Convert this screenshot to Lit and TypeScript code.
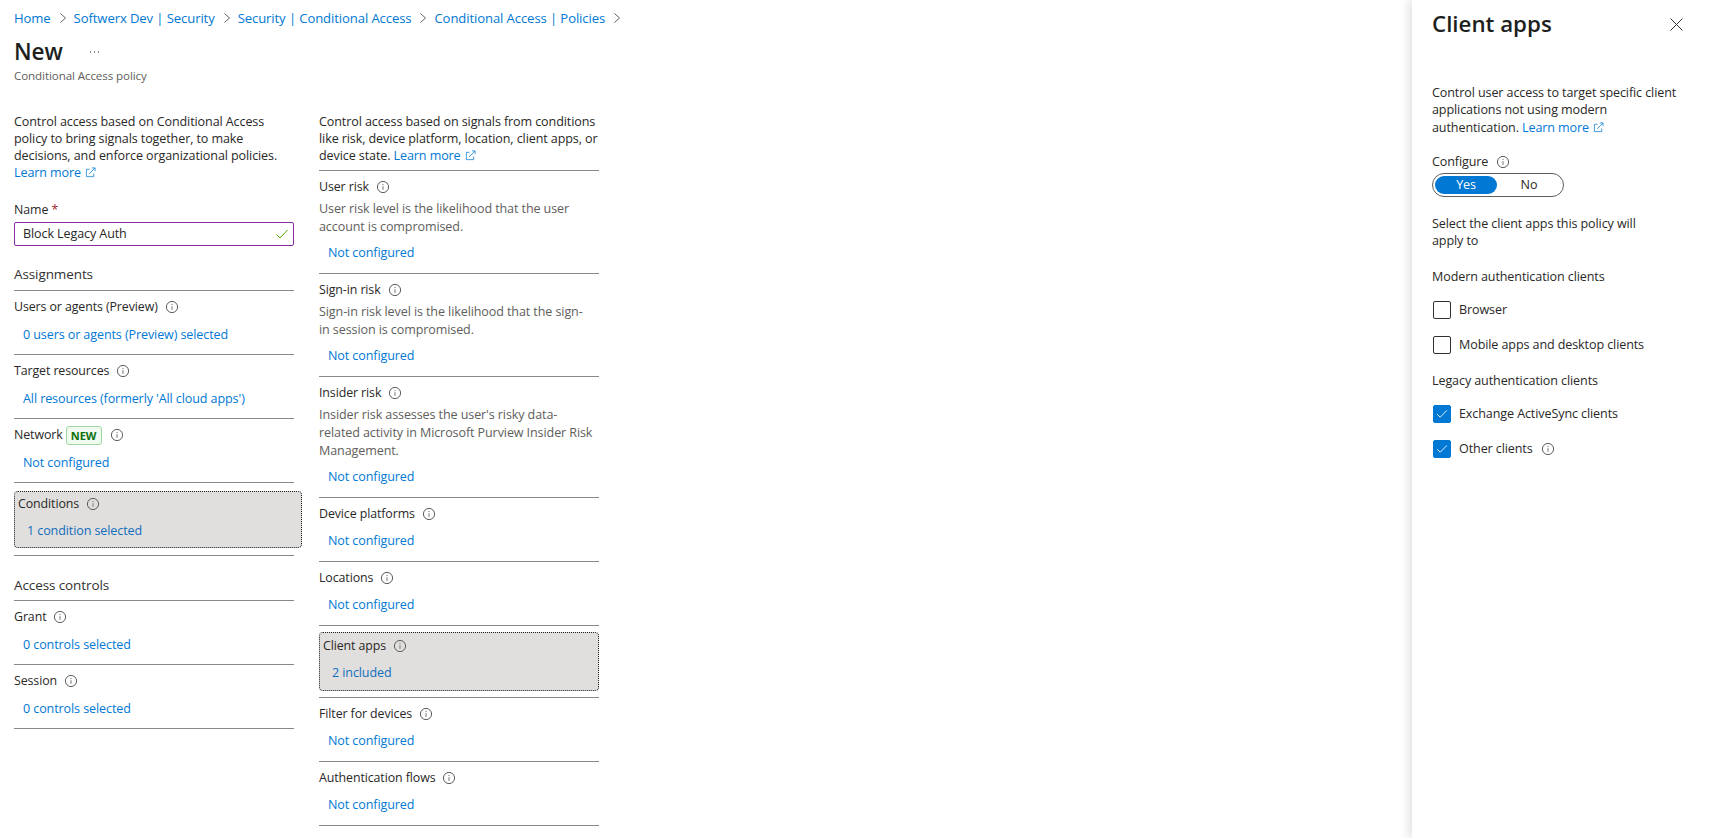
import { LitElement, html, css, svg } from "lit";
import { customElement } from "lit/decorators.js";

const info = html`<svg class="info" width="14" height="14" viewBox="0 0 14 14"><circle cx="7" cy="7" r="5.6" fill="none" stroke="#605e5c" stroke-width="1"/><path d="M7 6.2v3.6" stroke="#8a8886" stroke-width="1.2"/><circle cx="7" cy="4.5" r=".7" fill="#8a8886"/></svg>`;
const ext = html`<svg class="ext" width="11" height="11" viewBox="0 0 12 12" fill="none" stroke="#0078d4" stroke-width=".8"><path d="M5 2.5H1.5v8h8V7"/><path d="M4.5 7.5 10.8 1.2M7.5 1h3.5v3.5"/></svg>`;
const chev = html`<svg class="chev" width="8" height="12" viewBox="0 0 8 12" fill="none" stroke="#605e5c" stroke-width="1"><path d="M1.5 1.5 6.5 6l-5 4.5"/></svg>`;
const check = svg`<path d="M3.5 9.2 7 12.6 14.5 5" fill="none" stroke="#fff" stroke-width="1"/>`;

type Row = { label: unknown; link: string; desc?: unknown; sel?: boolean };

@customElement("app-root")
export class AppRoot extends LitElement {
  static styles = css`
    :host { display: block; width: 1711px; height: 838px; overflow: hidden; background: #fff;
      font-family: "Open Sans", "Liberation Sans", sans-serif; font-size: 12.55px; color: #292827; letter-spacing: -0.1px; }
    .page { display: flex; height: 838px; }
    .main { flex: 1; padding: 9px 0 0 14px; min-width: 0; }
    a { color: #0078d4; text-decoration: none; }
    .crumbs { display: flex; align-items: center; height: 18px; line-height: 18px; font-size: 13.1px; }
    .chev { margin: 0 7px 0 8px; }
    .title { display: flex; align-items: center; margin-top: 9px; height: 32px; }
    h1 { margin: 0; font-size: 22.5px; font-weight: 600; line-height: 32px; color: #201f1e; letter-spacing: 0; }
    .dots { margin-left: 27px; display: flex; gap: 2.5px; }
    .dots i { width: 1.5px; height: 1.5px; background: #8a8886; display: block; }
    .sub { font-size: 11.6px; line-height: 16px; color: #605e5c; }
    .cols { display: flex; gap: 25px; margin-top: 29px; }
    .col { width: 280px; }
    .p { line-height: 17px; }
    .ext { margin-left: 1px; vertical-align: -1px; }
    .info { margin-left: 7px; flex: none; }
    .intro { margin-bottom: 6px; }
    .name { margin-top: 19px; line-height: 20px; height: 20px; font-size: 12.4px; }
    .name b { color: #a4262c; font-weight: 400; }
    .input { margin-top: 2px; height: 24px; box-sizing: border-box; border: 1px solid #8a2da5; border-radius: 2px;
      display: flex; align-items: center; justify-content: space-between; padding: 0 4px 0 8px; line-height: 20px; }
    .sect { line-height: 20px; height: 20px; font-size: 13.5px; color: #323130; }
    .sect.a { margin-top: 18px; }
    .sect.b { margin-top: 19px; }
    .list { border-top: 1px solid #8a8886; margin-top: 6px; }
    .sect.b + .list { margin-top: 5px; }
    .col.tall .list { margin-top: 0; }
    .row { border-bottom: 1px solid #8a8886; padding: 6px 0 10px; }
    .lab { display: flex; align-items: center; height: 20px; line-height: 20px; font-size: 12.4px; }
    .desc { margin-top: 3px; line-height: 17.6px; color: #605e5c; }
    .lnk { display: block; height: 20px; line-height: 20px; margin: 7px 0 0 9px; }
    .wide .row { padding-bottom: 9px; }
    .wide .lnk { margin-top: 8px; }
    .desc + .lnk { margin-top: 8px; }
    .badge { margin-left: 3px; height: 19px; width: 36px; box-sizing: border-box; border: 1px solid #9fd89f; border-radius: 3px;
      background: #f1faf1; color: #0e700e; font-weight: 700; font-size: 11px; line-height: 17px; text-align: center; letter-spacing: 0; }
    .badge + .info { margin-left: 8px; }
    .row.sel { padding: 7px 0 8px; }
    .wide .row.sel { padding: 8px 0 7px; }
    .box { box-sizing: border-box; background: #e1dfdd; border: 1px dotted #201f1e; border-radius: 4px; padding: 2px 0 6px 3px; height: 57px; }
    .box .lnk { margin-left: 9px; color: #106ebe; }
    .wide .box .lnk { margin-top: 7px; }
    .wide .box { width: 288px; }
    .tall .row.sel { padding: 6px 0 6px; }
    .tall .box { height: 59px; padding-top: 3px; }
    .panel { width: 299px; box-sizing: border-box; flex: none; padding: 8px 0 0 20px; box-shadow: -3px 0 10px rgba(0,0,0,.13); position: relative; }
    .phead { display: flex; align-items: center; justify-content: space-between; height: 32px; padding-right: 28px; }
    h2 { margin: 0; font-size: 22.3px; font-weight: 600; color: #201f1e; line-height: 32px; letter-spacing: 0; }
    .pdesc { margin-top: 44px; line-height: 17.33px; }
    .lbl { height: 20px; line-height: 20px; display: flex; align-items: center; }
    .cfg { margin-top: 16px; }
    .cfg .info { margin-left: 8px; }
    .toggle { margin-top: 1px; width: 132px; height: 24px; box-sizing: border-box; border: 1px solid #605e5c; border-radius: 12px;
      display: flex; padding: 2px; line-height: 18px; }
    .toggle span { flex: 1; text-align: center; border-radius: 9px; }
    .toggle .on { background: #0078d4; color: #fff; flex: none; width: 62px; }
    .sel-text { margin-top: 18px; line-height: 17.5px; }
    .chk { display: flex; align-items: center; gap: 8px; height: 20px; line-height: 20px; padding-left: 1px; }
    .chk .info { margin-left: 0; }
    .cb { width: 18px; height: 18px; box-sizing: border-box; border: 1px solid #323130; border-radius: 2px; display: block; flex: none; }
    .cb.on { background: #0078d4; border-color: #0078d4; }
    .m17 { margin-top: 17px; } .m16 { margin-top: 16px; } .m13 { margin-top: 13px; } .m15 { margin-top: 15px; }
  `;

  private rows(rows: Row[]) {
    return rows.map((r) => r.sel
      ? html`<div class="row sel"><div class="box"><div class="lab">${r.label}${info}</div><a class="lnk">${r.link}</a></div></div>`
      : html`<div class="row"><div class="lab">${r.label}${info}</div>${r.desc ? html`<div class="desc">${r.desc}</div>` : ""}<a class="lnk">${r.link}</a></div>`);
  }

  private cb(label: string, on = false, cls = "m15", withInfo = false) {
    return html`<div class="chk ${cls}"><span class="cb ${on ? "on" : ""}">${on ? html`<svg width="16" height="16" viewBox="0 0 18 18">${check}</svg>` : ""}</span>${label}${withInfo ? info : ""}</div>`;
  }

  render() {
    const nc = "Not configured";
    return html`<div class="page">
      <div class="main">
        <div class="crumbs">
          <a>Home</a>${chev}<a>Softwerx Dev | Security</a>${chev}<a>Security | Conditional Access</a>${chev}<a>Conditional Access | Policies</a>${chev}
        </div>
        <div class="title"><h1>New</h1><span class="dots"><i></i><i></i><i></i></span></div>
        <div class="sub">Conditional Access policy</div>
        <div class="cols">
          <div class="col wide">
            <div class="p">Control access based on Conditional Access<br>policy to bring signals together, to make<br>decisions, and enforce organizational policies.<br><a>Learn more ${ext}</a></div>
            <div class="name">Name <b>*</b></div>
            <div class="input">Block Legacy Auth<svg width="14" height="14" viewBox="0 0 14 14" fill="none" stroke="#57a300" stroke-width="1"><path d="M1.5 7.5 5 11 12.5 3"/></svg></div>
            <div class="sect a">Assignments</div>
            <div class="list">${this.rows([
              { label: "Users or agents (Preview)", link: "0 users or agents (Preview) selected" },
              { label: "Target resources", link: "All resources (formerly 'All cloud apps')" },
              { label: html`Network<span class="badge">NEW</span>`, link: nc },
              { label: "Conditions", link: "1 condition selected", sel: true },
            ])}</div>
            <div class="sect b">Access controls</div>
            <div class="list">${this.rows([
              { label: "Grant", link: "0 controls selected" },
              { label: "Session", link: "0 controls selected" },
            ])}</div>
          </div>
          <div class="col tall">
            <div class="p intro">Control access based on signals from conditions<br>like risk, device platform, location, client apps, or<br>device state. <a>Learn more ${ext}</a></div>
            <div class="list">${this.rows([
              { label: "User risk", link: nc, desc: html`User risk level is the likelihood that the user<br>account is compromised.` },
              { label: "Sign-in risk", link: nc, desc: html`Sign-in risk level is the likelihood that the sign-<br>in session is compromised.` },
              { label: "Insider risk", link: nc, desc: html`Insider risk assesses the user's risky data-<br>related activity in Microsoft Purview Insider Risk<br>Management.` },
              { label: "Device platforms", link: nc },
              { label: "Locations", link: nc },
              { label: "Client apps", link: "2 included", sel: true },
              { label: "Filter for devices", link: nc },
              { label: "Authentication flows", link: nc },
            ])}</div>
          </div>
        </div>
      </div>
      <aside class="panel">
        <div class="phead"><h2>Client apps</h2>
          <svg width="13" height="13" viewBox="0 0 13 13" fill="none" stroke="#323130" stroke-width="1"><path d="M.5.5l12 12M12.5.5l-12 12"/></svg>
        </div>
        <div class="pdesc">Control user access to target specific client<br>applications not using modern<br>authentication. <a>Learn more ${ext}</a></div>
        <div class="lbl cfg">Configure${info}</div>
        <div class="toggle"><span class="on">Yes</span><span>No</span></div>
        <div class="sel-text">Select the client apps this policy will<br>apply to</div>
        <div class="lbl m17">Modern authentication clients</div>
        ${this.cb("Browser", false, "m13")}
        ${this.cb("Mobile apps and desktop clients")}
        <div class="lbl m16">Legacy authentication clients</div>
        ${this.cb("Exchange ActiveSync clients", true, "m13")}
        ${this.cb("Other clients", true, "m15", true)}
      </aside>
    </div>`;
  }
}
